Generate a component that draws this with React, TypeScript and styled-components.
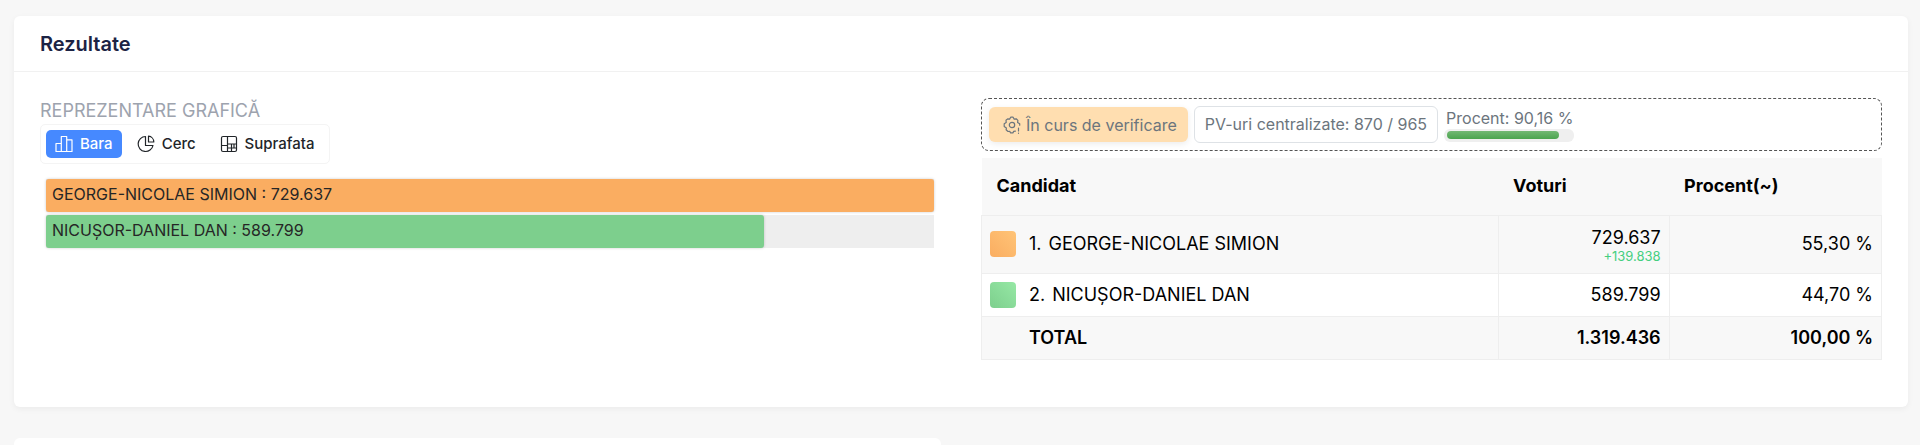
import React, { useState } from "react";
import styled, { createGlobalStyle } from "styled-components";

const Global = createGlobalStyle`
  *, *::before, *::after { box-sizing: border-box; }
  body {
    margin: 0;
    background: #f7f7f7;
    color: #000;
    font-family: Inter, "Liberation Sans", sans-serif;
    font-size: 18px;
    line-height: 24px;
  }
`;

const Page = styled.main`
  display: flex;
  flex-direction: column;
  gap: 31px;
  min-height: 100vh;
  padding: 16px 12px 0 14px;
`;

const Card = styled.section`
  background: #fff;
  border-radius: 6px;
  box-shadow: 0 2px 6px rgba(0, 0, 0, 0.05);
`;

const CardHeader = styled.header`
  padding: 15px 26px 14px;
  border-bottom: 1px solid #f1f1f1;
`;

const CardTitle = styled.h2`
  margin: 0;
  color: #1c2344;
  font-size: 20px;
  font-weight: 600;
  line-height: 26px;
`;

const CardBody = styled.div`
  display: grid;
  grid-template-columns: 1fr 1fr;
  gap: 40px;
  padding: 26px 26px 47px;
`;

const Column = styled.div`
  min-width: 0;
`;

const Caption = styled.h3`
  margin: 0;
  padding-top: 1px;
  color: #9da3ae;
  font-size: 18px;
  font-weight: 400;
  line-height: 24px;
  text-transform: uppercase;
`;

const Tabs = styled.div`
  display: flex;
  width: fit-content;
  gap: 6px;
  margin-top: 1px;
  padding: 5px;
  border: 1px solid #f4f4f4;
  border-radius: 5px;
`;

const Tab = styled.button<{ $active: boolean }>`
  display: flex;
  align-items: center;
  gap: 7px;
  height: 28px;
  padding: 0 9px;
  border: 0;
  border-radius: 5px;
  background: ${(p) => (p.$active ? "#4689ff" : "#fff")};
  color: ${(p) => (p.$active ? "#fff" : "#212529")};
  font-family: inherit;
  font-size: 15px;
  font-weight: 500;
  line-height: 20px;
  cursor: pointer;
`;

const Chart = styled.div`
  display: flex;
  flex-direction: column;
  gap: 3px;
  padding: 15px 7px 0 6px;
`;

const Track = styled.div`
  background: #eee;
`;

const Bar = styled.div<{ $color: string }>`
  height: 33px;
  padding: 0 6px;
  border-radius: 3px;
  background: ${(p) => p.$color};
  box-shadow: 0 0 3px rgba(0, 0, 0, 0.2);
  color: #262626;
  font-size: 16px;
  line-height: 31px;
  white-space: nowrap;
`;

const StatusBar = styled.div`
  display: flex;
  align-items: center;
  gap: 6px;
  height: 53px;
  margin-bottom: 7px;
  padding: 0 7px;
  border: 1px dashed #555;
  border-radius: 8px;
  color: #6c757d;
  font-size: 16px;
  line-height: 20px;
`;

const Badge = styled.span`
  display: flex;
  align-items: center;
  gap: 5px;
  height: 35px;
  padding: 0 11px 0 14px;
  border-radius: 6px;
  background: #ffdeb0;
  box-shadow: 0 2px 6px rgba(0, 0, 0, 0.08);
`;

const Counter = styled.span`
  height: 37px;
  padding: 0 10px;
  border: 1px solid #dee2e6;
  border-radius: 6px;
  line-height: 35px;
`;

const ProgressBox = styled.div`
  display: flex;
  flex-direction: column;
  width: 130px;
`;

const ProgressText = styled.span`
  padding-left: 2px;
  line-height: 22px;
  white-space: nowrap;
`;

const ProgressTrack = styled.div`
  height: 13px;
  padding: 2px 3px;
  border-radius: 6px;
  background: #efefef;
`;

const ProgressFill = styled.div`
  height: 8px;
  border-radius: 4px;
  background: linear-gradient(#72b873, #4ba44f);
`;

const Table = styled.table`
  width: 100%;
  border-collapse: collapse;
  table-layout: fixed;
`;

const HeadCell = styled.th<{ $width?: string }>`
  width: ${(p) => p.$width ?? "auto"};
  height: 57px;
  padding: 0 15px;
  background: #f8f8f8;
  font-weight: 700;
  text-align: left;
`;

const Row = styled.tr<{ $shaded?: boolean; $height: number; $bold?: boolean }>`
  height: ${(p) => p.$height}px;
  background: ${(p) => (p.$shaded ? "#f8f8f8" : "#fff")};
  font-weight: ${(p) => (p.$bold ? 600 : 400)};
`;

const Cell = styled.td<{ $right?: boolean }>`
  padding: 0 8px;
  border: 1px solid #eee;
  text-align: ${(p) => (p.$right ? "right" : "left")};
`;

const Candidate = styled.div`
  display: flex;
  align-items: center;
`;

const Rank = styled.span`
  margin-right: 7px;
`;

const Swatch = styled.span<{ $fill: string }>`
  flex: none;
  width: 26px;
  height: 26px;
  margin-right: 13px;
  border-radius: 4px;
  background: ${(p) => p.$fill};
`;

const Lead = styled.div`
  color: #45cf80;
  font-size: 13px;
  line-height: 12px;
`;

const NextRow = styled.div`
  display: grid;
  flex: 1;
  grid-template-columns: 1fr 1fr;
  gap: 40px;
`;

const NextCard = styled.section`
  background: #fff;
  border-radius: 6px 6px 0 0;
`;

const iconProps = {
  width: 18,
  height: 18,
  viewBox: "0 0 18 18",
  fill: "none",
  stroke: "currentColor",
  strokeWidth: 1.2,
  "aria-hidden": true,
} as const;

const BarsIcon = () => (
  <svg {...iconProps} strokeLinejoin="round">
    <path d="M1 8.500h5.300v8H1zM6.300 1.500h5.400v15H6.300zM11.700 4.800H17v11.700h-5.300z" />
  </svg>
);

const PieIcon = () => (
  <svg {...iconProps} strokeLinejoin="round">
    <path d="M8.500 1.500A7.500 7.500 0 1 0 16 10.500H8.500z" />
    <path d="M11.500 1.200v5.800h5.300A5.800 5.800 0 0 0 11.500 1.200z" />
  </svg>
);

const AreaIcon = () => (
  <svg {...iconProps}>
    <rect x="1.500" y="1.500" width="15" height="15" rx="1.500" />
    <path d="M7.500 1.500v15M1.500 10.500h6M7.500 9h9M11.500 9v7.500M7.500 13h9M14 9v4" />
  </svg>
);

const GearIcon = () => (
  <svg {...iconProps} strokeLinecap="round" strokeLinejoin="round">
    <path d="M12.400 15.100L10.700 15.400 9.900 16.900H7.600L6.700 15.300 5 15.500 3.100 13.800 3.400 12 1.200 10.500V7.700L3.200 6.400 3 4.200 4.600 2.900 6.600 3.100 7.700 1.200H10.100L11.200 3.100 13.200 2.800 14.900 4.400 14.600 6.400 16.700 7.700V9.200" />
    <circle cx="9" cy="9" r="2.700" />
    <path d="M15.500 12v3M15.500 17v.3" />
  </svg>
);

const tabs = [
  { id: "Bara", Icon: BarsIcon },
  { id: "Cerc", Icon: PieIcon },
  { id: "Suprafata", Icon: AreaIcon },
];

const candidates = [
  {
    name: "GEORGE-NICOLAE SIMION",
    votes: "729.637",
    lead: "+139.838",
    percent: "55,30 %",
    share: 100,
    color: "#faad61",
    swatch: "linear-gradient(45deg, #faad61, #ffc477)",
    height: 58,
  },
  {
    name: "NICUȘOR-DANIEL DAN",
    votes: "589.799",
    lead: "",
    percent: "44,70 %",
    share: 80.8,
    color: "#7dcf8d",
    swatch: "linear-gradient(45deg, #7dcf8d, #96e8a5)",
    height: 43,
  },
];

export default function App() {
  const [active, setActive] = useState("Bara");
  return (
    <>
      <Global />
      <Page>
        <Card>
          <CardHeader>
            <CardTitle>Rezultate</CardTitle>
          </CardHeader>
          <CardBody>
            <Column>
              <Caption>Reprezentare grafică</Caption>
              <Tabs>
                {tabs.map(({ id, Icon }) => (
                  <Tab key={id} type="button" $active={id === active} onClick={() => setActive(id)}>
                    <Icon />
                    {id}
                  </Tab>
                ))}
              </Tabs>
              <Chart>
                {candidates.map((c) => (
                  <Track key={c.name}>
                    <Bar $color={c.color} style={{ width: `${c.share}%` }}>
                      {c.name} : {c.votes}
                    </Bar>
                  </Track>
                ))}
              </Chart>
            </Column>
            <Column>
              <StatusBar>
                <Badge>
                  <GearIcon />
                  În curs de verificare
                </Badge>
                <Counter>PV-uri centralizate: 870 / 965</Counter>
                <ProgressBox>
                  <ProgressText>Procent: 90,16 %</ProgressText>
                  <ProgressTrack>
                    <ProgressFill style={{ width: "90.16%" }} />
                  </ProgressTrack>
                </ProgressBox>
              </StatusBar>
              <Table>
                <thead>
                  <tr>
                    <HeadCell>Candidat</HeadCell>
                    <HeadCell $width="19%">Voturi</HeadCell>
                    <HeadCell $width="23.600%">Procent(~)</HeadCell>
                  </tr>
                </thead>
                <tbody>
                  {candidates.map((c, i) => (
                    <Row key={c.name} $height={c.height} $shaded={i % 2 === 0}>
                      <Cell>
                        <Candidate>
                          <Swatch $fill={c.swatch} />
                          <Rank>{i + 1}.</Rank>
                          {c.name}
                        </Candidate>
                      </Cell>
                      <Cell $right>
                        {c.votes}
                        {c.lead && <Lead>{c.lead}</Lead>}
                      </Cell>
                      <Cell $right>{c.percent}</Cell>
                    </Row>
                  ))}
                  <Row $height={43} $shaded $bold>
                    <Cell>
                      <Candidate>
                        <Swatch $fill="none" />
                        TOTAL
                      </Candidate>
                    </Cell>
                    <Cell $right>1.319.436</Cell>
                    <Cell $right>100,00 %</Cell>
                  </Row>
                </tbody>
              </Table>
            </Column>
          </CardBody>
        </Card>
        <NextRow>
          <NextCard />
        </NextRow>
      </Page>
    </>
  );
}
